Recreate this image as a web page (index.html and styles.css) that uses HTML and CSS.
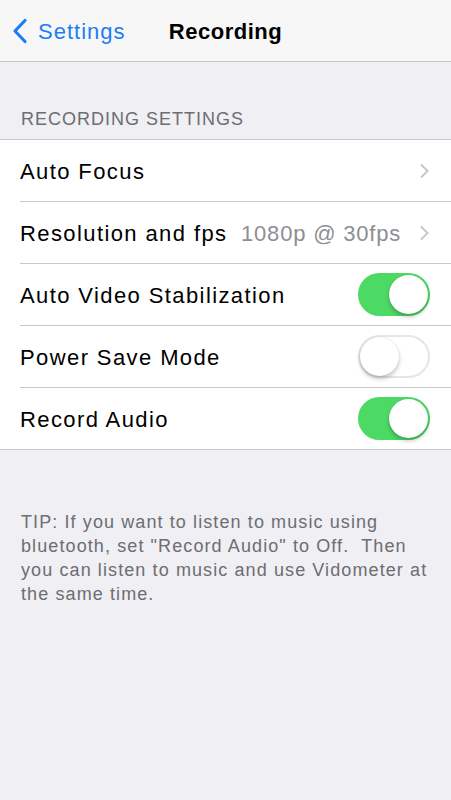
FILE: index.html
```html
<!DOCTYPE html>
<html lang="en">
<head>
    <meta charset="UTF-8">
    <title>Recording</title>
    <link rel="stylesheet" href="styles.css">
</head>
<body>

<div class="navbar">
    <a class="back" href="#">
        <svg class="back-chevron" width="18" height="26" viewBox="0 0 18 26">
            <polyline points="14,2.5 4,13 14,23.5" fill="none" stroke="currentColor" stroke-width="3.2" stroke-linecap="round" stroke-linejoin="round"/>
        </svg>
        <span>Settings</span>
    </a>
    <h1 class="title">Recording</h1>
</div>

<div class="section-header">RECORDING SETTINGS</div>

<ul class="table">
    <li class="row">
        <span class="label">Auto Focus</span>
        <span class="accessory">
            <svg class="chevron" width="10" height="16" viewBox="0 0 10 16">
                <polyline points="2,1.5 8.5,8 2,14.5" fill="none" stroke="currentColor" stroke-width="2"/>
            </svg>
        </span>
    </li>
    <li class="row">
        <span class="label">Resolution and fps</span>
        <span class="accessory">
            <span class="value">1080p @ 30fps</span>
            <svg class="chevron" width="10" height="16" viewBox="0 0 10 16">
                <polyline points="2,1.5 8.5,8 2,14.5" fill="none" stroke="currentColor" stroke-width="2"/>
            </svg>
        </span>
    </li>
    <li class="row">
        <span class="label">Auto Video Stabilization</span>
        <span class="switch on"><span class="knob"></span></span>
    </li>
    <li class="row">
        <span class="label">Power Save Mode</span>
        <span class="switch"><span class="knob"></span></span>
    </li>
    <li class="row">
        <span class="label">Record Audio</span>
        <span class="switch on"><span class="knob"></span></span>
    </li>
</ul>

<p class="tip">TIP: If you want to listen to music using<br>bluetooth, set "Record Audio" to Off.&nbsp; Then<br>you can listen to music and use Vidometer at<br>the same time.</p>

</body>
</html>
```

FILE: styles.css
```css
body {
    margin: 0;
    font-family: "Liberation Sans", Arial, sans-serif;
    background-color: #efeff4;
    color: #000;
}
.navbar {
    position: relative;
    height: 61px;
    background-color: #f7f7f8;
    border-bottom: 1px solid #c8c7cc;
    display: flex;
    align-items: center;
    justify-content: center;
}
.back {
    position: absolute;
    left: 11px;
    top: 0;
    bottom: 0;
    display: flex;
    align-items: center;
    gap: 9px;
    color: #1c7ef2;
    text-decoration: none;
    font-size: 22px;
    letter-spacing: 1px;
    padding-top: 2px;
}
.back-chevron {
    margin-top: -2px;
}
.title {
    margin: 0;
    padding-top: 2px;
    font-size: 22px;
    font-weight: bold;
    letter-spacing: 0.5px;
}
.section-header {
    padding: 45px 20px 8px 21px;
    font-size: 18px;
    line-height: 24px;
    letter-spacing: 1px;
    color: #6d6d72;
}
.table {
    list-style: none;
    margin: 0;
    padding: 0 0 0 20px;
    background-color: #fff;
    border-top: 1px solid #c8c7cc;
    border-bottom: 1px solid #c8c7cc;
}
.row {
    height: 61px;
    display: flex;
    align-items: center;
    justify-content: space-between;
    padding-right: 21px;
    border-bottom: 1px solid #c8c7cc;
    font-size: 22px;
    letter-spacing: 1.4px;
}
.row:last-child {
    border-bottom: none;
}
.label {
    padding-top: 2px;
}
.accessory {
    display: flex;
    align-items: center;
    gap: 18px;
    padding-right: 1px;
}
.value {
    color: #8e8e93;
    letter-spacing: 0.8px;
    padding-top: 2px;
}
.chevron {
    color: #c7c7cc;
}
.switch {
    position: relative;
    width: 72px;
    height: 43px;
    box-sizing: border-box;
    border-radius: 22px;
    border: 2px solid #e5e5ea;
    background-color: #fff;
}
.switch.on {
    background-color: #4cd964;
    border-color: #4cd964;
}
.knob {
    position: absolute;
    top: 0;
    left: 0;
    width: 39px;
    height: 39px;
    border-radius: 50%;
    background-color: #fff;
    box-shadow: 0 3px 4px rgba(0, 0, 0, 0.22), 0 0 1px rgba(0, 0, 0, 0.2);
}
.switch.on .knob {
    left: auto;
    right: 0;
}
.tip {
    margin: 0;
    padding: 60px 20px 0 21px;
    font-size: 18px;
    line-height: 24px;
    letter-spacing: 1.1px;
    color: #6d6d72;
}
```
